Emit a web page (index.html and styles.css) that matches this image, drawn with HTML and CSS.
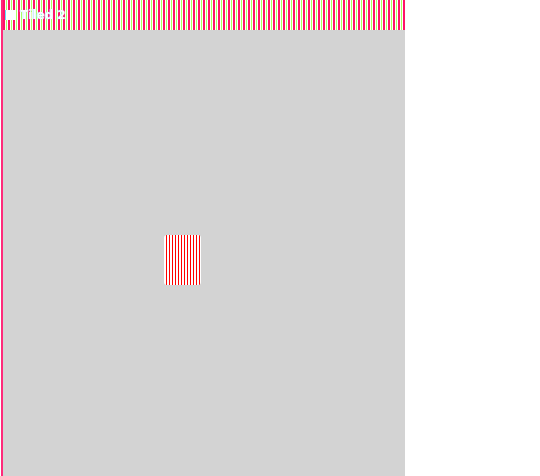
FILE: index.html
```html
<!DOCTYPE html>
<html>
<head>
<meta charset="utf-8">
<link rel="stylesheet" href="styles.css">
</head>
<body>
<div class="window">
  <div class="titlebar">
    <span class="icon"></span>
    <span class="title">Tiled 2</span>
  </div>
  <div class="content">
    <div class="card"></div>
  </div>
</div>
</body>
</html>
```
FILE: styles.css
```css
html, body {
  margin: 0;
  padding: 0;
  background: #ffffff;
  height: 100%;
  overflow: hidden;
}
.window {
  margin-left: 1px;
  width: 404px;
  height: 476px;
  display: flex;
  flex-direction: column;
  border-left: 2px solid #ff2a7a;
  box-sizing: border-box;
}
.titlebar {
  height: 30px;
  flex: none;
  display: flex;
  align-items: center;
  gap: 4px;
  padding-left: 2px;
  background: repeating-linear-gradient(90deg, #ff1468 0 2px, #ffffff 2px 3px, #a8ff60 3px 4px, #ffffff 4px 5px);
  font-family: "DejaVu Sans", sans-serif;
  font-weight: bold;
  font-size: 12px;
  color: #ffffff;
}
.icon {
  width: 10px;
  height: 10px;
  background: #ffffff;
  border-left: 1px solid #60e0ff;
}
.title {
  text-shadow: 0 0 1px #80e0ff;
}
.content {
  flex: 1;
  background: #d3d3d3;
  padding: 205px 0 0 161px;
}
.card {
  width: 37px;
  height: 50px;
  border-radius: 3px;
  background: repeating-linear-gradient(90deg, #ffffff 0 2px, #ff0000 2px 3px);
}
```
